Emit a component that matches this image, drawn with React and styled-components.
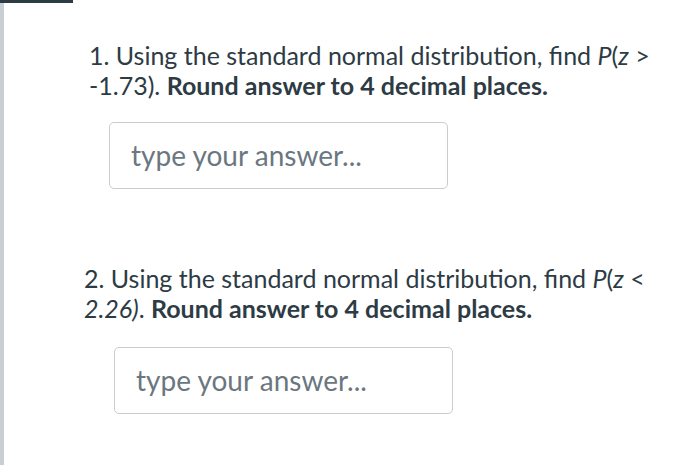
import React from "react";
import styled, { createGlobalStyle } from "styled-components";

const Global = createGlobalStyle`
  html, body { margin: 0; padding: 0; background: #ffffff; }
  body { font-family: Lato, "Noto Sans", sans-serif; }
`;

const Page = styled.div`
  position: relative;
  width: 700px;
  height: 465px;
  overflow: hidden;
  background: #ffffff;
  display: flex;
`;

const SideStrip = styled.div`
  width: 4px;
  flex: none;
  background: #c9ced3;
  margin-top: 3px;
`;

const TopTab = styled.div`
  position: absolute;
  left: 0;
  top: 0;
  width: 73px;
  height: 3px;
  background: #2d3b45;
`;

const Content = styled.div`
  display: flex;
  flex-direction: column;
  padding-top: 40px;
`;

const Question = styled.div`
  display: flex;
  flex-direction: column;
  margin-left: ${(p) => p.$indent}px;
  margin-bottom: ${(p) => p.$gap}px;
`;

const Prompt = styled.p`
  margin: 0;
  width: 600px;
  font-family: Lato, "Noto Sans", sans-serif;
  font-size: 25px;
  line-height: 30px;
  color: #2d3b45;
  & b { font-weight: 700; }
  & i { font-style: italic; }
`;

const AnswerBox = styled.div`
  margin-top: ${(p) => p.$top}px;
  margin-left: ${(p) => p.$shift}px;
  width: 339px;
  height: 67px;
  box-sizing: border-box;
  border: 1px solid #c7cdd1;
  border-radius: 5px;
  display: flex;
  align-items: center;
  padding-left: 21px;
  padding-bottom: 2px;
  font-family: Lato, "Noto Sans", sans-serif;
  font-size: 28px;
  color: #6b7780;
`;

export default function App() {
  return (
    <Page>
      <Global />
      <TopTab />
      <SideStrip />
      <Content>
        <Question $indent={85} $gap={74}>
          <Prompt>
            1. Using the standard normal distribution, find <i>P</i>(<i>z</i> &gt;
            <br />
            -1.73). <b>Round answer to 4 decimal places.</b>
          </Prompt>
          <AnswerBox $top={22} $shift={20}>type your answer...</AnswerBox>
        </Question>
        <Question $indent={80} $gap={0}>
          <Prompt>
            2. Using the standard normal distribution, find <i>P</i>(<i>z</i> &lt;
            <br />
            <i>2.26)</i>. <b>Round answer to 4 decimal places.</b>
          </Prompt>
          <AnswerBox $top={24} $shift={30}>type your answer...</AnswerBox>
        </Question>
      </Content>
    </Page>
  );
}
